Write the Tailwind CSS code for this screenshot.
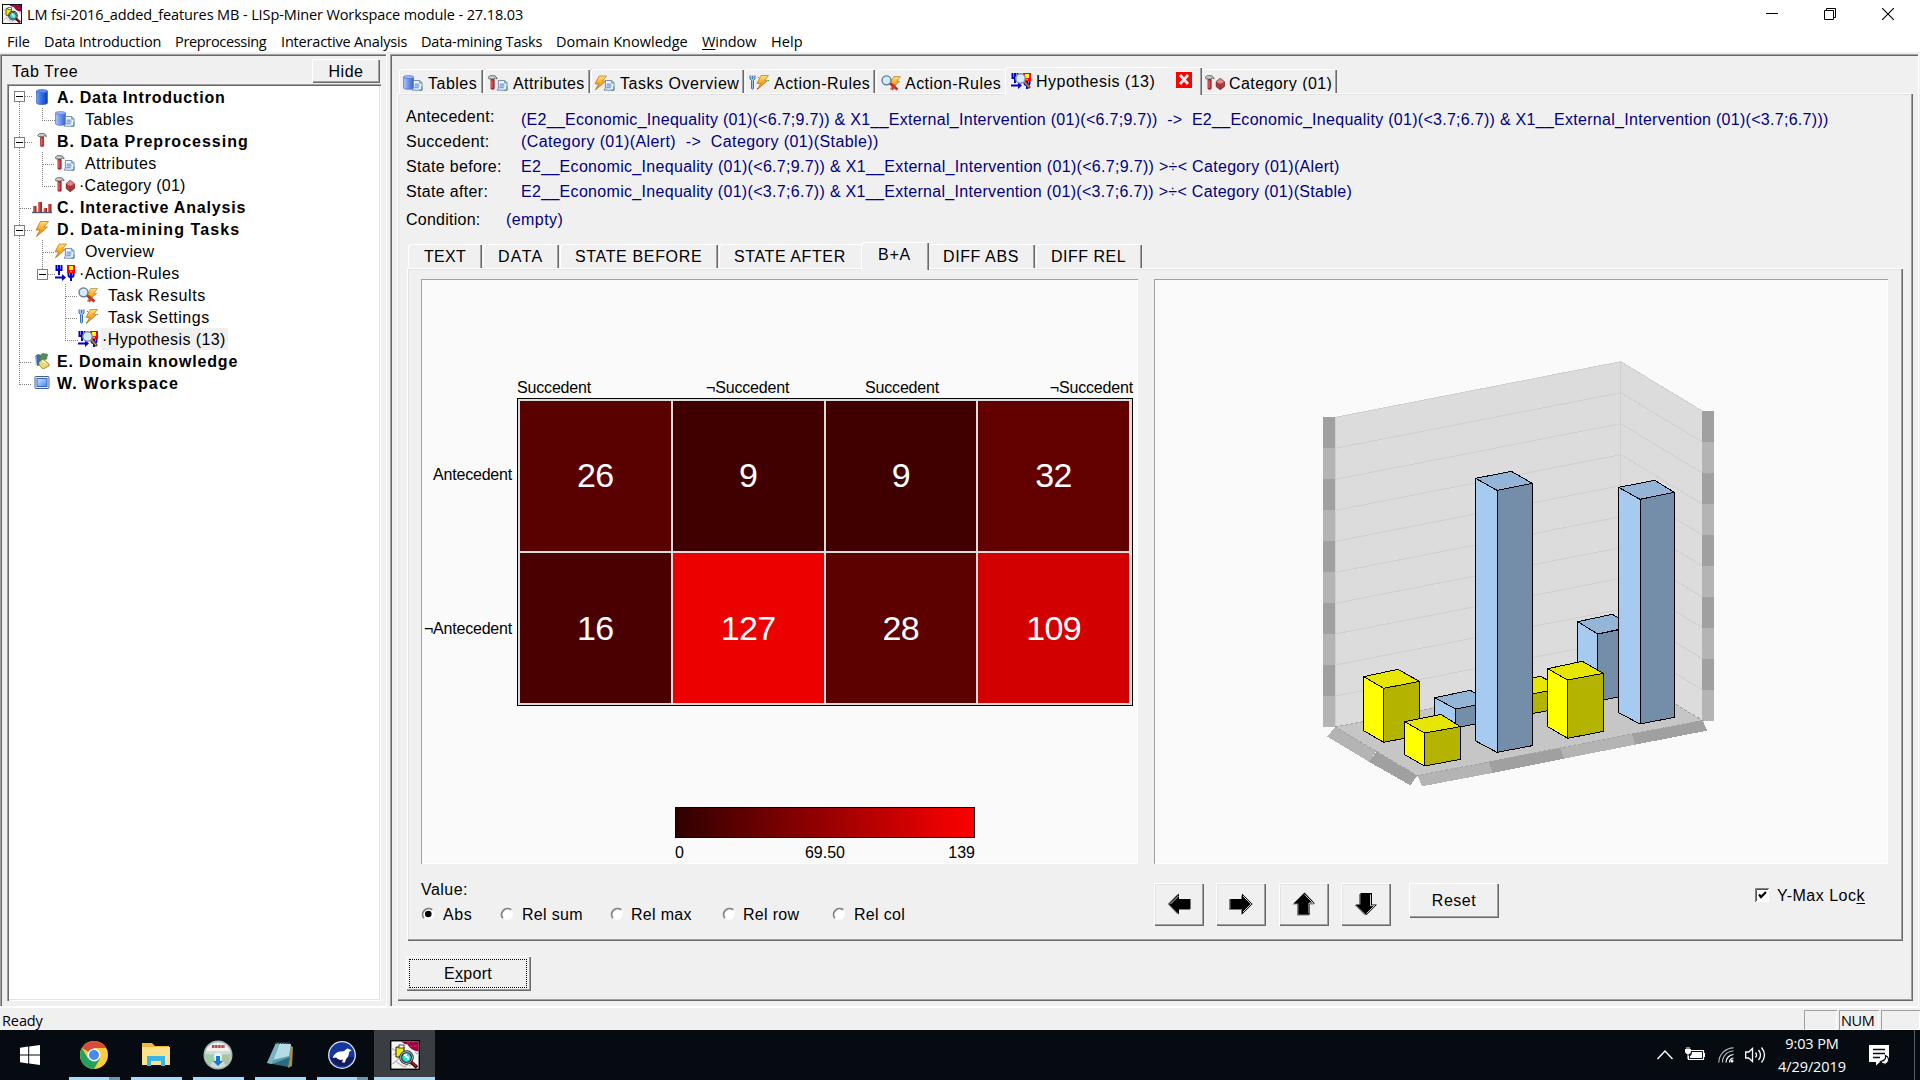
<!DOCTYPE html>
<html lang="en">
<head>
<meta charset="utf-8">
<title>LISp-Miner Workspace</title>
<script src="https://cdn.jsdelivr.net/npm/@tailwindcss/browser@4"></script>
</head>
<body class="flex h-[1080px] w-[1920px] flex-col overflow-hidden bg-[#f0f0f0] font-['Liberation_Sans',sans-serif] text-[16px] tracking-[0.3px] text-black">

<!-- shared icon symbols -->
<svg class="absolute size-0">
  <defs>
    <linearGradient id="gCyl"><stop offset="0" stop-color="#7aa4f4"/><stop offset=".35" stop-color="#3f78ea"/><stop offset="1" stop-color="#0c3fb4"/></linearGradient>
    <linearGradient id="gCylL"><stop offset="0" stop-color="#b4c8fa"/><stop offset=".5" stop-color="#6b92ec"/><stop offset="1" stop-color="#3a62c8"/></linearGradient>
    <linearGradient id="gBolt" x2="0" y2="1"><stop offset="0" stop-color="#ffe27a"/><stop offset=".5" stop-color="#fba91c"/><stop offset="1" stop-color="#e88a10"/></linearGradient>
    <linearGradient id="gWs" x2="1" y2="1"><stop offset="0" stop-color="#cfe2ff"/><stop offset="1" stop-color="#4d86ea"/></linearGradient>
    <linearGradient id="gRed"><stop offset="0" stop-color="#e08080"/><stop offset=".5" stop-color="#c83c3c"/><stop offset="1" stop-color="#941c1c"/></linearGradient>
  </defs>
  <symbol id="cyl" viewBox="0 0 12 16"><path d="M.5 2v12c0 2 11 2 11 0V2z" fill="url(#gCyl)" stroke="#2a50b8" stroke-width=".6"/><ellipse cx="6" cy="2.2" rx="5.5" ry="1.7" fill="#5c8cf0" stroke="#3461cc" stroke-width=".6"/></symbol>
  <symbol id="doc" viewBox="0 0 12 12"><path d="M2 .5h7L11.500 3v8H7l-1 .7-1-.7H.6L2 9z" fill="#eef4ff" stroke="#5a72a0" stroke-width=".9"/><path d="M3.500 4.500h5M3.300 6.500h5.500M3 8.500h5" stroke="#3d78d8" stroke-width="1"/><path d="M9 1v2.300h2.200M11.300 7v4.200H8.500" fill="none" stroke="#3c9a50" stroke-width="1"/></symbol>
  <symbol id="hammer" viewBox="0 0 12 16"><path d="M1 2.500 3.500.6h4C9.300.7 10.800 2 11 4.200 9.500 3.200 8.800 3 8 3.300V4.500H4V3.600L2.600 4.400z" fill="#c9d2d2" stroke="#4c5656" stroke-width=".9"/><rect x="4.300" y="4.500" width="3.600" height="10.800" rx=".8" fill="#c62f35" stroke="#7d1a1e" stroke-width=".7"/><path d="M5.400 6v8" stroke="#f09090" stroke-width=".8"/></symbol>
  <symbol id="bolt" viewBox="0 0 14 16"><path d="M5.500.5h8L9 6h3.500L1.500 15.500 5 9H1z" fill="url(#gBolt)" stroke="#a8661a" stroke-width=".7" stroke-linejoin="round"/></symbol>
  <symbol id="gem" viewBox="0 0 10 13"><path d="M5 .5 9.500 4v5L5 12.500.5 9V4z" fill="#b03a3e" stroke="#7b2226" stroke-width=".8"/><path d="M.8 4 5 6.500 9.200 4 5 .8z" fill="#dc8a8a"/><path d="M5 6.500v5.700" stroke="#7b2226" stroke-width=".6"/></symbol>
  <symbol id="rules" viewBox="0 0 20 16"><path d="M1.500 0v5h5V0M4 0v10M13.500 7v3q0 2 2 2h1q2 0 2-2V7M16 7v9" fill="none" stroke="#0000c8" stroke-width="2"/><path d="M0 11.500h7V9l4 3.500L7 16v-2.500H0z" fill="#0000c8"/><rect x="12" width="8" height="8" fill="#f00"/><rect x="14" y="1" width="4" height="4" fill="#ff0"/><rect x="15.300" y="5.800" width="1.500" height="1.400" fill="#ff0"/></symbol>

  <symbol id="i-db" viewBox="0 0 20 16"><use href="#cyl" x="4" width="12" height="16"/></symbol>
  <symbol id="i-tables" viewBox="0 0 20 16"><path d="M.5 2v11c0 1.600 10 2 10 0V2z" fill="url(#gCylL)" stroke="#3a5cc0" stroke-width=".6"/><ellipse cx="5.500" cy="2" rx="5" ry="1.500" fill="#9cb6f8" stroke="#4a6cd0" stroke-width=".6"/><use href="#doc" x="8" y="5" width="12" height="11"/></symbol>
  <symbol id="i-hammer" viewBox="0 0 20 16"><use href="#hammer" x="4" width="12" height="14"/></symbol>
  <symbol id="i-attr" viewBox="0 0 20 16"><use href="#hammer" x="-1" width="11" height="15"/><use href="#doc" x="8" y="5" width="12" height="11"/></symbol>
  <symbol id="i-cat" viewBox="0 0 20 16"><use href="#hammer" x="-1" width="11" height="15"/><use href="#gem" x="10.500" y="2.500" width="9.500" height="13"/></symbol>
  <symbol id="i-bars" viewBox="0 0 20 16"><path d="M0 13.500h20" stroke="#4d5a68" stroke-width="1.400"/><g fill="url(#gRed)"><rect x="1" y="7" width="3.500" height="6"/><rect x="6" y="3" width="4" height="10"/><rect x="11.500" y="9" width="3.500" height="4"/><rect x="16" y="5" width="3.500" height="8"/></g></symbol>
  <symbol id="i-bolt" viewBox="0 0 20 16"><use href="#bolt" x="3" width="14" height="16"/></symbol>
  <symbol id="i-over" viewBox="0 0 20 16"><use href="#bolt" x="-1" width="13" height="16"/><use href="#doc" x="8" y="5" width="12" height="11"/></symbol>
  <symbol id="i-results" viewBox="0 0 20 16"><use href="#bolt" x="8" width="12" height="16"/><path d="m8.500 8 8 6.500" stroke="#c02820" stroke-width="2.600"/><path d="m14 10-3 5" stroke="#d83830" stroke-width="2"/><circle cx="5.500" cy="5.300" r="4.500" fill="#d6eaff" stroke="#5b7898" stroke-width="1.300"/></symbol>
  <symbol id="i-settings" viewBox="0 0 20 16"><use href="#bolt" x="7" width="13" height="15"/><path d="M1 .5v3.500l1.500 1.500v8q1 1.500 2 0v-8L6 4V.5M3.500 1v3" fill="#9cc0f0" stroke="#3c70b8" stroke-width="1"/><path d="M9 2h1v1H9zM8 13h1v1H8zM19 5h1v1h-1z" fill="#2a2"/></symbol>
  <symbol id="i-hyp" viewBox="0 0 20 16"><use href="#rules" width="20" height="16"/><path d="m13 8.500 6 6.500" stroke="#7a4a28" stroke-width="2.600"/><path d="m13 8.500 5 5.500" stroke="#d8a070" stroke-width="1"/><circle cx="9.500" cy="5.500" r="4.700" fill="#d4ecfc" stroke="#7890a0" stroke-width="1.400"/></symbol>
  <symbol id="i-domain" viewBox="0 0 20 16"><path d="m3 3 3-2 3 1v10l-4 1z" fill="#3a6ea8"/><path d="m8 2 3-2 5 1-1 5-6 3z" fill="#5a8c50"/><path d="M4 3v9" stroke="#a8c8e8" stroke-width="1"/><path d="m7 9 4-3 6 5v2l-6 3-4-4z" fill="#e6d878" stroke="#8c7c28" stroke-width=".8"/><path d="m10 8 4 2" stroke="#fff8c0" stroke-width="1.500"/></symbol>
  <symbol id="i-ws" viewBox="0 0 20 16"><rect x="3" y="1.500" width="14" height="12" rx="1" fill="#e8f0fc" stroke="#46608c"/><rect x="5" y="3.500" width="10" height="8" fill="url(#gWs)" stroke="#3468c8"/></symbol>
  <symbol id="i-app" viewBox="0 0 30 30"><rect x=".7" y=".7" width="28.600" height="28.600" fill="#f4f4f4" stroke="#000" stroke-width="1.400"/><path d="M1.500 8l6 4 1 7-6 5m4-2 8 5 3-2M3 15l6-3m10 14 4-3 5 3m-3-14 4 3" fill="none" stroke="#b4b4b4" stroke-width="1.200"/><path d="M11 1.400h17.600v10q-8-1-11-7-3 0-6.600-3z" fill="#90004c"/><path d="M17 3h3M24 6h3M22 2h2M20 6h2" stroke="#f02020" stroke-width="1.500"/><path d="M6 7v10h8V7z" fill="#f0e800" stroke="#222"/><rect x="9" y="5" width="5" height="3" fill="#fff" stroke="#222" stroke-width=".8"/><circle cx="16.500" cy="17.500" r="5.800" fill="#28dede" stroke="#111" stroke-width="2.800"/><circle cx="16.500" cy="17.500" r="5.900" fill="none" stroke="#aaa" stroke-width="1.200"/><path d="M14 15h2v2h2v3" fill="none" stroke="#fff" stroke-width="1.500"/><path d="m21 22 6 5.500" stroke="#300" stroke-width="3.400"/><path d="m21.500 22 5 4.500" stroke="#c02020" stroke-width="1.400"/></symbol>
</svg>

<!-- title bar -->
<header class="flex h-[27px] shrink-0 items-start bg-white font-['Open_Sans',sans-serif] text-[14.5px] leading-[29px]">
  <svg class="mt-[4px] ml-[2px] size-[20px]"><use href="#i-app"/></svg>
  <span class="ml-[5px] tracking-[-0.11px]">LM fsi-2016_added_features MB - LISp-Miner Workspace module - 27.18.03</span>
  <div class="mt-[8px] mr-[26px] ml-auto flex gap-[46px]">
    <svg class="h-[12px] w-[12px]" viewBox="0 0 12 12"><path d="M0 5.500h12" stroke="#000"/></svg>
    <svg class="h-[12px] w-[12px]" viewBox="0 0 12 12" fill="none" stroke="#000"><path d="M.5 2.500h9v9h-9zM2.500 2.500v-2h9v9h-2"/></svg>
    <svg class="h-[12px] w-[12px]" viewBox="0 0 12 12"><path d="m0 0 12 12M12 0 0 12" stroke="#000" stroke-width="1.100"/></svg>
  </div>
</header>

<!-- menu bar -->
<nav class="flex h-[25px] shrink-0 gap-[14px] bg-white pl-[7px] font-['Open_Sans',sans-serif] text-[14.5px] leading-[29px]">
  <span class="w-[23px] tracking-normal">File</span>
  <span class="w-[117px] tracking-[-0.13px] whitespace-nowrap">Data Introduction</span>
  <span class="w-[92px] tracking-[-0.33px]">Preprocessing</span>
  <span class="w-[126px] tracking-[-0.17px] whitespace-nowrap">Interactive Analysis</span>
  <span class="w-[121px] tracking-[-0.17px] whitespace-nowrap">Data-mining Tasks</span>
  <span class="w-[132px] tracking-[0.02px] whitespace-nowrap">Domain Knowledge</span>
  <span class="w-[55px] tracking-[-0.05px]"><span class="underline underline-offset-2">W</span>indow</span>
  <span class="tracking-[0.1px]">Help</span>
</nav>

<main class="flex h-[955px] shrink-0 gap-[3px] pt-[2px]">
  <!-- tab tree pane -->
  <aside class="flex w-[387px] flex-col pl-[7px] shadow-[inset_-1px_-1px_0_#fff,inset_1px_1px_0_#a0a0a0,inset_2px_2px_0_#696969]">
    <div class="flex h-[30px] shrink-0 pl-[5px]">
      <span class="leading-[36px] tracking-[0.5px]">Tab Tree</span>
      <button class="mt-[5px] mr-[7px] ml-auto h-[24px] w-[68px] leading-[26px] tracking-[0.5px] shadow-[inset_1px_1px_0_#fff,inset_-1px_-1px_0_#696969,inset_-2px_-2px_0_#a0a0a0]">Hide</button>
    </div>
    <div class="relative h-[917px] w-[374px] bg-white pt-[2px] leading-[22px] shadow-[inset_1px_1px_0_#a0a0a0,inset_2px_2px_0_#696969,inset_-1px_-1px_0_#fff,inset_-2px_-2px_0_#e3e3e3]">
      <svg class="absolute top-0 left-0 h-[310px] w-[100px]" viewBox="7 84 100 310" shape-rendering="crispEdges">
        <g fill="none" stroke="#808080" stroke-dasharray="1 1">
          <path d="M19.500 102v283M19.500 208.500H32M19.500 362.500H32M19.500 384.500H32M25 96.500h7M25 142.500h7M25 230.500h7M48 274.500h7"/>
          <path d="M42.500 108v12.500H55M42.500 152v34.500H55M42.500 164.500H55M42.500 240v29M42.500 252.500H55M65.500 284v56.500H78M65.500 296.500H78M65.500 318.500H78"/>
        </g>
        <g fill="#fff" stroke="#808080"><path d="M14.500 91.500h10v10h-10zM14.500 137.500h10v10h-10zM14.500 225.500h10v10h-10zM37.500 269.500h10v10h-10z"/></g>
        <path d="M16 96.500h7M16 142.500h7M16 230.500h7M39 274.500h7" stroke="#000"/>
      </svg>
      <div class="flex h-[22px] items-center pl-[25px]"><svg class="h-4 w-5"><use href="#i-db"/></svg><b class="ml-[5px] pt-[2px] tracking-[0.78px]">A. Data Introduction</b></div>
      <div class="flex h-[22px] items-center pl-[48px]"><svg class="h-4 w-5"><use href="#i-tables"/></svg><span class="ml-[10px] pt-[2px] tracking-[0.45px]">Tables</span></div>
      <div class="flex h-[22px] items-center pl-[25px]"><svg class="h-4 w-5"><use href="#i-hammer"/></svg><b class="ml-[5px] pt-[2px] tracking-[1px]">B. Data Preprocessing</b></div>
      <div class="flex h-[22px] items-center pl-[48px]"><svg class="h-4 w-5"><use href="#i-attr"/></svg><span class="ml-[10px] pt-[2px] tracking-[0.4px]">Attributes</span></div>
      <div class="flex h-[22px] items-center pl-[48px]"><svg class="h-4 w-5"><use href="#i-cat"/></svg><span class="ml-[4px] pt-[2px] tracking-[0.25px]">·Category (01)</span></div>
      <div class="flex h-[22px] items-center pl-[25px]"><svg class="h-4 w-5"><use href="#i-bars"/></svg><b class="ml-[5px] pt-[2px] tracking-[0.83px]">C. Interactive Analysis</b></div>
      <div class="flex h-[22px] items-center pl-[25px]"><svg class="h-4 w-5"><use href="#i-bolt"/></svg><b class="ml-[5px] pt-[2px] tracking-[1.08px]">D. Data-mining Tasks</b></div>
      <div class="flex h-[22px] items-center pl-[48px]"><svg class="h-4 w-5"><use href="#i-over"/></svg><span class="ml-[10px] pt-[2px] tracking-[0.35px]">Overview</span></div>
      <div class="flex h-[22px] items-center pl-[48px]"><svg class="h-4 w-5"><use href="#rules"/></svg><span class="ml-[4px] pt-[2px] tracking-[0.35px]">·Action-Rules</span></div>
      <div class="flex h-[22px] items-center pl-[71px]"><svg class="h-4 w-5"><use href="#i-results"/></svg><span class="ml-[10px] pt-[2px] tracking-[0.6px]">Task Results</span></div>
      <div class="flex h-[22px] items-center pl-[71px]"><svg class="h-4 w-5"><use href="#i-settings"/></svg><span class="ml-[10px] pt-[2px] tracking-[0.5px]">Task Settings</span></div>
      <div class="flex h-[22px] items-center pl-[71px]"><svg class="h-4 w-5"><use href="#i-hyp"/></svg><span class="ml-[3px] h-[22px] w-[127px] bg-[#f0f0f0] pl-px leading-[24px] tracking-[0.4px]">·Hypothesis (13)</span></div>
      <div class="flex h-[22px] items-center pl-[25px]"><svg class="h-4 w-5"><use href="#i-domain"/></svg><b class="ml-[5px] pt-[2px] tracking-[0.83px]">E. Domain knowledge</b></div>
      <div class="flex h-[22px] items-center pl-[25px]"><svg class="h-4 w-5"><use href="#i-ws"/></svg><b class="ml-[5px] pt-[2px] tracking-[1.15px]">W. Workspace</b></div>
    </div>
  </aside>

  <!-- work area -->
  <section class="flex w-[1529px] flex-col pt-[13px] pl-[7px] shadow-[inset_-1px_-1px_0_#fff,inset_1px_1px_0_#a0a0a0,inset_2px_2px_0_#696969]">
    <div class="relative z-10 flex h-[26px] shrink-0 items-start pl-[2px] leading-[30px] whitespace-nowrap">
      <div class="mt-[2px] flex h-[24px] w-[84px] rounded-tl-[3px] pl-[4px] shadow-[inset_1px_1px_0_#fff,inset_-1px_0_0_#696969,inset_-2px_0_0_#a0a0a0]"><svg class="mt-[6px] h-4 w-5"><use href="#i-tables"/></svg><span class="ml-[5px] h-[22px] overflow-hidden tracking-[0.5px]">Tables</span></div>
      <div class="mt-[2px] ml-[1px] flex h-[24px] w-[106px] rounded-tl-[3px] pl-[4px] shadow-[inset_1px_1px_0_#fff,inset_-1px_0_0_#696969,inset_-2px_0_0_#a0a0a0]"><svg class="mt-[6px] h-4 w-5"><use href="#i-attr"/></svg><span class="ml-[5px] h-[22px] overflow-hidden tracking-[0.42px]">Attributes</span></div>
      <div class="mt-[2px] ml-[1px] flex h-[24px] w-[153px] rounded-tl-[3px] pl-[4px] shadow-[inset_1px_1px_0_#fff,inset_-1px_0_0_#696969,inset_-2px_0_0_#a0a0a0]"><svg class="mt-[6px] h-4 w-5"><use href="#i-over"/></svg><span class="ml-[5px] h-[22px] overflow-hidden tracking-[0.53px]">Tasks Overview</span></div>
      <div class="mt-[2px] ml-[1px] flex h-[24px] w-[130px] rounded-tl-[3px] pl-[4px] shadow-[inset_1px_1px_0_#fff,inset_-1px_0_0_#696969,inset_-2px_0_0_#a0a0a0]"><svg class="mt-[6px] h-4 w-5"><use href="#i-settings"/></svg><span class="ml-[5px] h-[22px] overflow-hidden tracking-[0.46px]">Action-Rules</span></div>
      <div class="mt-[2px] ml-[1px] flex h-[24px] w-[129px] rounded-tl-[3px] pl-[5px] shadow-[inset_1px_1px_0_#fff]"><svg class="mt-[6px] h-4 w-5"><use href="#i-results"/></svg><span class="ml-[4px] h-[22px] overflow-hidden tracking-[0.46px]">Action-Rules</span></div>
      <div class="flex h-[28px] w-[197px] rounded-tl-[3px] bg-[#f0f0f0] pl-[6px] shadow-[inset_1px_1px_0_#fff,inset_-1px_0_0_#696969,inset_-2px_0_0_#a0a0a0]"><svg class="mt-[6px] h-4 w-5"><use href="#i-hyp"/></svg><span class="ml-[5px] tracking-[0.48px]">Hypothesis (13)</span>
        <svg class="mt-[5px] mr-[10px] ml-auto size-4" viewBox="0 0 16 16"><path fill="#f00" d="M0 0h16v16H0z"/><path d="m4 3 8 9M12 3l-8 9" stroke="#f0f0f0" stroke-width="2.800"/></svg></div>
      <div class="mt-[2px] flex h-[24px] w-[135px] pl-[3px] shadow-[inset_0_1px_0_#fff,inset_-1px_0_0_#696969,inset_-2px_0_0_#a0a0a0]"><svg class="mt-[6px] h-4 w-5"><use href="#i-cat"/></svg><span class="ml-[4px] h-[22px] overflow-hidden tracking-[0.42px]">Category (01)</span></div>
    </div>

    <div class="flex h-[908px] w-[1516px] flex-col pt-[11px] pl-[9px] shadow-[inset_1px_1px_0_#fff,inset_-1px_-1px_0_#696969,inset_-2px_-2px_0_#a0a0a0,inset_2px_2px_0_#e3e3e3]">
      <!-- rule description -->
      <dl class="grid shrink-0 grid-cols-[115px_auto] justify-start leading-[25px] whitespace-pre">
        <dt class="h-[25px] tracking-[0.3px]">Antecedent:</dt><dd class="h-[22px] translate-y-[3px] tracking-[0.285px] text-[#000080]">(E2__Economic_Inequality (01)(&lt;6.7;9.7)) &amp; X1__External_Intervention (01)(&lt;6.7;9.7))  -&gt;  E2__Economic_Inequality (01)(&lt;3.7;6.7)) &amp; X1__External_Intervention (01)(&lt;3.7;6.7)))</dd>
        <dt class="h-[25px] tracking-[0.35px]">Succedent:</dt><dd class="tracking-[0.395px] text-[#000080]">(Category (01)(Alert)  -&gt;  Category (01)(Stable))</dd>
        <dt class="h-[25px] tracking-[0.32px]">State before:</dt><dd class="tracking-[0.31px] text-[#000080]">E2__Economic_Inequality (01)(&lt;6.7;9.7)) &amp; X1__External_Intervention (01)(&lt;6.7;9.7)) &gt;÷&lt; Category (01)(Alert)</dd>
        <dt class="h-[28px] tracking-[0.33px]">State after:</dt><dd class="tracking-[0.307px] text-[#000080]">E2__Economic_Inequality (01)(&lt;3.7;6.7)) &amp; X1__External_Intervention (01)(&lt;3.7;6.7)) &gt;÷&lt; Category (01)(Stable)</dd>
        <dt class="h-[25px] tracking-[0.25px]">Condition:</dt><dd class="-ml-[15px] tracking-[0.42px] text-[#000080]">(empty)</dd>
      </dl>

      <!-- view tabs -->
      <div class="relative z-10 mt-[10px] flex h-[26px] shrink-0 items-start pl-[2px] leading-[25px] whitespace-nowrap">
        <div class="mt-[2px] h-[24px] w-[74px] rounded-tl-[3px] pl-[16px] tracking-[0.3px] shadow-[inset_1px_1px_0_#fff,inset_-1px_0_0_#696969,inset_-2px_0_0_#a0a0a0]">TEXT</div>
        <div class="mt-[2px] ml-[1px] h-[24px] w-[76px] rounded-tl-[3px] pl-[15px] tracking-[1.3px] shadow-[inset_1px_1px_0_#fff,inset_-1px_0_0_#696969,inset_-2px_0_0_#a0a0a0]">DATA</div>
        <div class="mt-[2px] ml-[1px] h-[24px] w-[158px] rounded-tl-[3px] pl-[15px] tracking-[0.65px] shadow-[inset_1px_1px_0_#fff,inset_-1px_0_0_#696969,inset_-2px_0_0_#a0a0a0]">STATE BEFORE</div>
        <div class="mt-[2px] ml-[1px] h-[24px] w-[142px] rounded-tl-[3px] pl-[15px] tracking-[0.6px] shadow-[inset_1px_1px_0_#fff]">STATE AFTER</div>
        <div class="h-[28px] w-[68px] rounded-tl-[3px] bg-[#f0f0f0] pl-[17px] tracking-[0.8px] shadow-[inset_1px_1px_0_#fff,inset_-1px_0_0_#696969,inset_-2px_0_0_#a0a0a0]">B+A</div>
        <div class="mt-[2px] h-[24px] w-[106px] pl-[14px] tracking-[0.6px] shadow-[inset_0_1px_0_#fff,inset_-1px_0_0_#696969,inset_-2px_0_0_#a0a0a0]">DIFF ABS</div>
        <div class="mt-[2px] ml-[1px] h-[24px] w-[106px] rounded-tl-[3px] pl-[15px] tracking-[0.5px] shadow-[inset_1px_1px_0_#fff,inset_-1px_0_0_#696969,inset_-2px_0_0_#a0a0a0]">DIFF REL</div>
      </div>

      <div class="ml-[1px] flex h-[673px] w-[1496px] shrink-0 gap-[16px] pt-[11px] pl-[14px] shadow-[inset_1px_1px_0_#fff,inset_-1px_-1px_0_#696969,inset_-2px_-2px_0_#a0a0a0,inset_2px_2px_0_#e3e3e3]">
        <!-- contingency heat map -->
        <div class="w-[717px]">
          <div class="h-[585px] bg-[#fafafa] pt-[99px] shadow-[inset_1px_1px_0_#a0a0a0,inset_-1px_-1px_0_#fff]">
            <div class="ml-[96px] grid h-[20px] w-[616px] grid-cols-[189px_159px_1fr_1fr] leading-[20px] tracking-[-0.17px]">
              <span>Succedent</span><span>¬Succedent</span><span>Succedent</span><span class="text-right">¬Succedent</span>
            </div>
            <div class="flex h-[308px] gap-[5px]">
              <div class="grid w-[91px] grid-rows-2 items-center text-right tracking-[-0.2px]"><span>Antecedent</span><span>¬Antecedent</span></div>
              <div class="grid w-[616px] grid-cols-4 grid-rows-2 gap-[2px] border border-black bg-[#dcdcdc] p-[2px] pr-[3px] text-center text-[34px] leading-[149px] tracking-[-0.6px] text-white">
                <div class="bg-[#590000]">26</div><div class="bg-[#400000]">9</div><div class="bg-[#400000]">9</div><div class="bg-[#620000]">32</div>
                <div class="bg-[#4a0000] leading-[151px]">16</div><div class="bg-[#ed0000] leading-[151px]">127</div><div class="bg-[#5c0000] leading-[151px]">28</div><div class="bg-[#d30000] leading-[151px]">109</div>
              </div>
            </div>
            <div class="mt-[101px] ml-[254px] w-[300px] tracking-normal">
              <div class="h-[31px] border border-black bg-linear-to-r/srgb from-[#300000] to-[#ff0000]"></div>
              <div class="grid grid-cols-3 leading-[29px]"><span>0</span><span class="text-center">69.50</span><span class="text-right">139</span></div>
            </div>
          </div>
          <div class="mt-[16px] h-[19px] leading-[19px] tracking-[0.45px]">Value:</div>
          <div class="mt-[4px] grid h-[20px] grid-cols-[79px_110px_112px_110px_auto] leading-[20px]">
            <label class="flex items-center gap-[8px]"><svg class="size-[14px]" viewBox="0 0 14 14"><circle cx="7" cy="7" r="6" fill="#fff"/><path d="M2.800 11.200A6 6 0 0 1 11.200 2.800" fill="none" stroke="#808080" stroke-width="1.800"/><circle cx="7.300" cy="7" r="3.300"/></svg><span class="pt-[2px] tracking-[0.6px]">Abs</span></label>
            <label class="flex items-center gap-[8px]"><svg class="size-[14px]" viewBox="0 0 14 14"><circle cx="7" cy="7" r="6" fill="#fff"/><path d="M2.800 11.200A6 6 0 0 1 11.200 2.800" fill="none" stroke="#808080" stroke-width="1.800"/></svg><span class="pt-[2px]">Rel sum</span></label>
            <label class="flex items-center gap-[8px]"><svg class="size-[14px]" viewBox="0 0 14 14"><circle cx="7" cy="7" r="6" fill="#fff"/><path d="M2.800 11.200A6 6 0 0 1 11.200 2.800" fill="none" stroke="#808080" stroke-width="1.800"/></svg><span class="-ml-px pt-[2px]">Rel max</span></label>
            <label class="flex items-center gap-[8px]"><svg class="size-[14px]" viewBox="0 0 14 14"><circle cx="7" cy="7" r="6" fill="#fff"/><path d="M2.800 11.200A6 6 0 0 1 11.200 2.800" fill="none" stroke="#808080" stroke-width="1.800"/></svg><span class="-ml-px pt-[2px]">Rel row</span></label>
            <label class="flex items-center gap-[8px]"><svg class="size-[14px]" viewBox="0 0 14 14"><circle cx="7" cy="7" r="6" fill="#fff"/><path d="M2.800 11.200A6 6 0 0 1 11.200 2.800" fill="none" stroke="#808080" stroke-width="1.800"/></svg><span class="pt-[2px]">Rel col</span></label>
          </div>
        </div>

        <!-- 3D column chart -->
        <div class="w-[734px]">
          <div class="h-[585px] bg-[#fafafa] pt-[71px] pl-[146px] shadow-[inset_1px_1px_0_#a0a0a0,inset_-1px_-1px_0_#fff]">
            <svg class="size-[440px]" viewBox="0 0 1320 1320" shape-rendering="crispEdges">
              <path d="M69 202h36v929H69zM1207 183h35v929h-35z" fill="#b4b4b4"/>
              <path d="M69 202h36v92H69zM69 387h36v93H69zM69 573h36v93H69zM69 759h36v93H69zM69 945h36v93H69zM1207 183h35v93h-35zM1207 369h35v93h-35zM1207 555h35v93h-35zM1207 741h35v93h-35zM1207 927h35v93h-35z" fill="#a0a0a0"/>
              <path d="M106 1130 229 1203 208 1236 82 1160zM353 1277 566 1234 577 1269 366 1309zM780 1191 995 1149 1006 1184 792 1226z" fill="#b4b4b4"/>
              <path d="M229 1204 352 1276 331 1306 208 1236zM566 1234 780 1191 792 1226 577 1269zM995 1149 1207 1108 1221 1142 1006 1184z" fill="#a0a0a0"/>
              <path d="M106 202 962 35l245 148v929L962 964 106 1131z" fill="#dcdcdc"/>
              <path d="M106 1131 962 964l245 147-855 166z" fill="#c6c6c6"/>
              <g fill="none" stroke="#cfcfcf" stroke-width="3">
                <path d="M107 202v929M962 35v929"/>
                <path d="M106 202 962 35l245 148M106 295 962 128l245 148M106 388 962 221l245 148M106 481 962 314l245 148M106 574 962 407l245 148M106 667 962 500l245 148M106 760 962 593l245 148M106 852 962 685l245 148M106 945 962 778l245 148M106 1038 962 871l245 148"/>
              </g>
              <path d="M106 1131 962 964l245 147-855 166z" fill="none" stroke="#a0a0a0" stroke-width="3" stroke-dasharray="9 6"/>
              <g stroke="#000" stroke-width="3" stroke-linejoin="round">
                <path d="M833 815 893 852V1053L833 1018z" fill="#a6caf0"/><path d="M893 852 999 831V1032L893 1053z" fill="#748eaa"/><path d="M833 815 937 793 999 829 893 852z" fill="#95b5d8"/>
                <path d="M615 1001 679 1035V1094L615 1060z" fill="#ff0"/><path d="M679 1035 786 1015V1074L679 1094z" fill="#b3b300"/><path d="M615 1001 722 979 786 1015 679 1035z" fill="#e6e600"/>
                <path d="M404 1043 467 1077V1134L404 1098z" fill="#a6caf0"/><path d="M467 1077 572 1057V1112L467 1134z" fill="#748eaa"/><path d="M404 1043 511 1021 572 1057 467 1077z" fill="#95b5d8"/>
                <path d="M191 980 251 1015V1177L191 1142z" fill="#ff0"/><path d="M251 1015 358 994V1156L251 1177z" fill="#b3b300"/><path d="M191 980 294 958 358 994 251 1015z" fill="#e6e600"/>
                <path d="M956 412 1020 448V1122L956 1088z" fill="#a6caf0"/><path d="M1020 448 1123 427V1102L1020 1122z" fill="#748eaa"/><path d="M956 412 1064 391 1123 427 1020 448z" fill="#95b5d8"/>
                <path d="M743 956 803 990V1165L743 1130z" fill="#ff0"/><path d="M803 990 910 970V1144L803 1165z" fill="#b3b300"/><path d="M743 956 847 934 910 970 803 990z" fill="#e6e600"/>
                <path d="M527 385 591 421V1207L527 1173z" fill="#a6caf0"/><path d="M591 421 697 400V1187L591 1207z" fill="#748eaa"/><path d="M527 385 634 364 697 400 591 421z" fill="#95b5d8"/>
                <path d="M314 1115 374 1149V1248L314 1214z" fill="#ff0"/><path d="M374 1149 481 1130V1228L374 1248z" fill="#b3b300"/><path d="M314 1115 423 1093 481 1130 374 1149z" fill="#e6e600"/>
              </g>
            </svg>
          </div>
          <div class="mt-[19px] flex items-start">
            <button class="mr-[12px] flex h-[43px] w-[50px] items-center justify-center pb-[2px] shadow-[inset_1px_1px_0_#fff,inset_-1px_-1px_0_#696969,inset_-2px_-2px_0_#a0a0a0,inset_2px_2px_0_#e3e3e3]"><svg class="size-[24px]" viewBox="0 0 24 24"><path d="M.5 12 10.500 2v5H23v11H10.500v4.500z" fill="#808080"/><path d="M2 12 12 1.500V7h11.500v10H12v5.500z"/><path d="M3.500 12 11.500 4" stroke="#fff" stroke-width=".8"/></svg></button>
            <button class="mr-[13px] flex h-[43px] w-[50px] items-center justify-center pb-[2px] shadow-[inset_1px_1px_0_#fff,inset_-1px_-1px_0_#696969,inset_-2px_-2px_0_#a0a0a0,inset_2px_2px_0_#e3e3e3]"><svg class="size-[24px]" viewBox="0 0 24 24"><path d="M0 7h12V3l9 9.500-9 10.500v-5H0z" fill="#808080"/><path d="M1.500 7H13V1.500L23.500 12 13 22.500V17H1.500z"/><path d="m14 4 8 8-8 8" fill="none" stroke="#fff" stroke-width=".8"/></svg></button>
            <button class="mr-[12px] flex h-[43px] w-[50px] items-center justify-center pb-[2px] shadow-[inset_1px_1px_0_#fff,inset_-1px_-1px_0_#696969,inset_-2px_-2px_0_#a0a0a0,inset_2px_2px_0_#e3e3e3]"><svg class="size-[24px]" viewBox="0 0 24 24"><path d="M.5 12.500 12 2l10 10.500h-5v11H5v-11z" fill="#808080"/><path d="M1.500 11.500 12.500.500 23 11.500h-5v11H6.500v-11z"/><path d="m12.500 2.500 8.500 8.500h-4v10.500" fill="none" stroke="#fff" stroke-width=".8"/></svg></button>
            <button class="flex h-[43px] w-[50px] items-center justify-center pb-[2px] shadow-[inset_1px_1px_0_#fff,inset_-1px_-1px_0_#696969,inset_-2px_-2px_0_#a0a0a0,inset_2px_2px_0_#e3e3e3]"><svg class="size-[24px]" viewBox="0 0 24 24"><path d="M5 2h12v11h4L11 23.500.5 13H5z" fill="#808080"/><path d="M6.500 1H18v11.500h5L12.500 23 1.500 12.500h5z"/><path d="M16.500 2.500v11.200h4L12.500 21.500" fill="none" stroke="#fff" stroke-width=".8"/></svg></button>
            <button class="ml-[18px] h-[35px] w-[90px] leading-[34px] tracking-[0.5px] shadow-[inset_1px_1px_0_#fff,inset_-1px_-1px_0_#696969,inset_-2px_-2px_0_#a0a0a0]">Reset</button>
            <label class="mt-[2px] ml-[256px] flex leading-[22px] tracking-[0.5px] whitespace-nowrap"><svg class="mt-[3px] mr-[8px] size-[14px]" viewBox="0 0 14 14"><path fill="#fff" d="M0 0h14v14H0z"/><path d="M.5 14V.5H14" fill="none" stroke="#808080"/><path d="M1.500 13V1.500H13" fill="none" stroke="#505050"/><path d="M4 6.500 6 9l5-5" fill="none" stroke="#000" stroke-width="2.200"/></svg><span>Y-Max Loc<u class="underline-offset-2">k</u></span></label>
          </div>
        </div>
      </div>

      <button class="mt-[15px] h-[35px] w-[125px] shrink-0 p-[3px] shadow-[inset_1px_1px_0_#fff,inset_-1px_-1px_0_#696969,inset_-2px_-2px_0_#a0a0a0]"><span class="block h-[29px] w-[118px] border border-dotted border-black leading-[27px]">E<u class="underline-offset-2">x</u>port</span></button>
    </div>
  </section>
</main>

<!-- status bar -->
<footer class="flex h-[23px] shrink-0 border-t border-white pt-[2px] pl-[2px] font-['Open_Sans',sans-serif] text-[14.5px] leading-[22px]">
  <span class="tracking-[-0.1px]">Ready</span>
  <div class="ml-auto h-[20px] w-[33px] shadow-[inset_1px_1px_0_#a0a0a0,inset_-1px_-1px_0_#fff]"></div>
  <div class="ml-[2px] h-[20px] w-[40px] pl-[2px] tracking-[-0.4px] shadow-[inset_1px_1px_0_#a0a0a0,inset_-1px_-1px_0_#fff]">NUM</div>
  <div class="ml-[2px] h-[20px] w-[39px] shadow-[inset_1px_1px_0_#a0a0a0,inset_-1px_-1px_0_#fff]"></div>
</footer>

<!-- taskbar -->
<div class="flex h-[50px] shrink-0 bg-[#060b12] font-['Open_Sans',sans-serif] text-[14.5px] text-white">
  <div class="flex w-[63px] items-center pl-[20px]"><svg class="h-[20px] w-[20px]" viewBox="0 0 20 20" fill="#fff"><path d="M0 2.800 8.200 1.600v7.900H0zM9.200 1.500 20 0v9.500H9.200zM0 10.500h8.200v7.900L0 17.200zM9.200 10.500H20V20L9.200 18.500z"/></svg></div>
  <div class="flex w-[62px] flex-col items-center"><svg class="mt-[11px] size-[28px]" viewBox="0 0 28 28"><circle cx="14" cy="14" r="14" fill="#fccc3c"/><path d="M14 14 1.900 7A14 14 0 0 1 26.100 7H14z" fill="#d84a3c"/><path d="M1.900 7A14 14 0 0 0 14 28L20.100 17.500 14 14l-6 3.500z" fill="#22a060"/><circle cx="14" cy="14" r="6.500" fill="#fff"/><circle cx="14" cy="14" r="5" fill="#4688f4"/></svg><div class="mt-auto ml-auto flex h-[3px] w-[56px]"><i class="w-[40px] bg-[#a4dcfa]"></i><i class="w-[11px] bg-[#7195a8]"></i></div></div>
  <div class="flex w-[62px] flex-col items-center"><svg class="mt-[13px] h-[24px] w-[28px]" viewBox="0 0 28 24"><path d="M0 0h10l3 3h14v19H0z" fill="#f0b83c"/><path d="M0 4h28v18H0z" fill="#fde28c"/><path d="M5 13h18v10h-4v-5H9v5H5z" fill="#3cb4e8"/></svg><i class="mt-auto h-[3px] w-[51px] bg-[#a4dcfa]"></i></div>
  <div class="flex w-[62px] flex-col items-center"><svg class="mt-[10px] size-[30px]" viewBox="0 0 30 30"><circle cx="15" cy="15" r="14.500" fill="#a8b4b4"/><circle cx="15" cy="15" r="13" fill="#cfdcd8"/><path d="M3 11a13 13 0 0 1 24 0z" fill="#f4f0ee"/><path d="M9 6.500h13" stroke="#b04c48" stroke-width="3" stroke-dasharray="2.500 .6"/><path d="M2.500 14 15 15 7 25.500A14 14 0 0 1 2.500 14z" fill="#9cd0a8"/><path d="M27.500 14 15 15l8 10.500A14 14 0 0 0 27.500 14z" fill="#a8c4a0"/><circle cx="15" cy="17" r="4" fill="#e8f4fc"/><path d="M13 16h4v5h3l-5 5-5-5h3z" fill="#1478dc"/></svg><i class="mt-auto h-[3px] w-[51px] bg-[#a4dcfa]"></i></div>
  <div class="flex w-[62px] flex-col items-center"><svg class="mt-[11px] h-[28px] w-[28px]" viewBox="0 0 28 28"><path d="m20 2 7 4-1 19-4 2z" fill="#a88c50"/><path d="m10 2 15 1-3 22-21-3z" fill="#5a9cac"/><path d="m10 2 15 1-2 12-16 4z" fill="#b4dce4"/><path d="m10 2-9 20 5 1L14 2z" fill="#78b4c0"/><path d="M10 2h15" stroke="#303838" stroke-width="2" stroke-dasharray="1.500 1"/><path d="m7 23 15 3 2-10z" fill="#2c6c80"/></svg><i class="mt-auto h-[3px] w-[51px] bg-[#a4dcfa]"></i></div>
  <div class="flex w-[62px] flex-col items-center"><svg class="mt-[11px] size-[28px]" viewBox="0 0 28 28"><circle cx="14" cy="14" r="13.300" fill="#16389c" stroke="#dce4f4" stroke-width="1.300"/><path d="M2 16a12.500 12.500 0 0 0 24 0z" fill="#141c5c"/><path d="M23.500 9.500 21 8q-2-1.500-3.500 1-2 2-5.500 1.500Q7 11 4.500 17l3.500-.5q3 3.500 7 2l-1 3h3l1-3.500q3-2.500 3-7z" fill="#fff"/></svg><div class="mt-auto ml-auto flex h-[3px] w-[56px]"><i class="w-[40px] bg-[#a4dcfa]"></i><i class="w-[11px] bg-[#7195a8]"></i></div></div>
  <div class="ml-[1px] flex w-[61px] flex-col items-center bg-[#3a3d42]"><svg class="mt-[10px] size-[30px]"><use href="#i-app"/></svg><i class="mt-auto h-[3px] w-full bg-[#a4dcfa]"></i></div>

  <div class="ml-auto flex items-start">
    <svg class="mt-[20px] h-[10px] w-[16px]" viewBox="0 0 16 10"><path d="m.5 9 7.500-8 7.500 8" fill="none" stroke="#fff" stroke-width="1.400"/></svg>
    <svg class="mt-[17px] ml-[12px] h-[15px] w-[20px]" viewBox="0 0 20 15"><path d="M6 3.500h12.500v9H3.500V9" fill="none" stroke="#fff" stroke-width="1.200"/><path d="M7 5h10v6H5V9q2-1 2-4zM19 6h1v4h-1zM1.500 0h1v2h1V0h1v2H6v3q-.5 2-2.500 2v5h-1V7Q.5 7 0 5V2h1.500z" fill="#fff"/></svg>
    <svg class="mt-[17px] ml-[13px] h-[16px] w-[17px]" viewBox="0 0 17 16" fill="none" stroke="#fff" stroke-width="1.200"><path d="M11.500 15.500a4.500 4.500 0 0 1 4-4.500M8 15.500A8 8 0 0 1 15.500 7.500" /><path d="M4.500 15.500A11 11 0 0 1 15.500 4M.8 15.500A15 15 0 0 1 15.500.8" opacity=".7"/><circle cx="14" cy="14" r="1.500" fill="#fff" stroke="none"/></svg>
    <svg class="mt-[16px] ml-[10px] h-[18px] w-[21px]" viewBox="0 0 21 18" fill="none" stroke="#fff" stroke-width="1.300"><path d="M.7 6h3L7.500 2.500v13L3.700 12h-3z"/><path d="M10.500 6.500q2 2.500 0 5M13.500 4q4 5 0 10M16.500 1.500q6 7.500 0 15"/></svg>
    <div class="ml-[12px] w-[68px] pt-[2px] text-center leading-[23px] tracking-[-0.1px] whitespace-nowrap">9:03 PM<br>4/29/2019</div>
    <svg class="mt-[15px] ml-[23px] h-[21px] w-[21px]" viewBox="0 0 21 21"><path d="M0 0h20v17h-9l-4 3.500V17H0z" fill="#fff"/><path d="M4 4.500h12M4 8.500h12M4 12.500h7" stroke="#060b12" stroke-width="1.300"/><path d="M16.500 10.500q1 5-5 6 2 3.500 5.500 2.500 3-1.500 2.500-5-.5-2.500-3-3.500z" fill="#fff" stroke="#060b12" stroke-width="1.200"/></svg>
    <i class="mr-[5px] ml-[24px] h-[50px] w-px bg-[#5a5e64]"></i>
  </div>
</div>
</body>
</html>
